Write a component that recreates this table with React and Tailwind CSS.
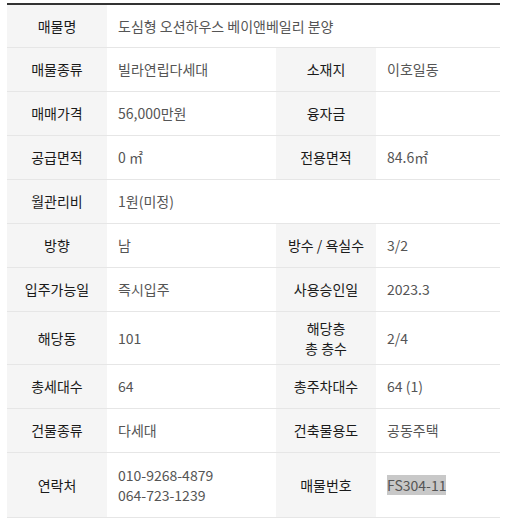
const rows = [
  { cells: [["매물명", "도심형 오션하우스 베이앤베일리 분양"]], full: true },
  { cells: [["매물종류", "빌라연립다세대"], ["소재지", "이호일동"]] },
  { cells: [["매매가격", "56,000만원"], ["융자금", ""]] },
  { cells: [["공급면적", "0 ㎡"], ["전용면적", "84.6㎡"]] },
  { cells: [["월관리비", "1원(미정)"]], full: true },
  { cells: [["방향", "남"], ["방수 / 욕실수", "3/2"]] },
  { cells: [["입주가능일", "즉시입주"], ["사용승인일", "2023.3"]] },
  { cells: [["해당동", "101"], [["해당층", "총 층수"], "2/4"]], h: "h-[53px]" },
  { cells: [["총세대수", "64"], ["총주차대수", "64 (1)"]] },
  { cells: [["건물종류", "다세대"], ["건축물용도", "공동주택"]] },
  { cells: [["연락처", ["010-9268-4879", "064-723-1239"]], ["매물번호", "FS304-11"]], h: "h-[65px]", mark: true },
];

function Lines({ v }) {
  if (Array.isArray(v)) {
    return (
      <div className="flex flex-col leading-[20px]">
        {v.map((l) => (
          <span key={l}>{l}</span>
        ))}
      </div>
    );
  }
  return <span>{v}</span>;
}

export default function App() {
  return (
    <div className="bg-white w-[507px] h-[519px] pt-[3px] px-[7px] font-['Noto_Sans_CJK_KR','Noto_Sans',sans-serif] text-[14px]">
      <div className="border-t-2 border-[#333]">
        {rows.map((r, i) => (
          <div
            key={i}
            className={`grid ${r.full ? "grid-cols-[100px_397px]" : "grid-cols-[100px_169px_100px_128px]"} border-b border-[#e6e6e6] ${r.h || (i === 0 ? "h-[43px]" : "h-[44px]")}`}
          >
            {r.cells.map(([label, value], j) => (
              <div key={j} className="contents">
                <div className="flex items-center justify-center text-center bg-[#f5f5f5] text-[#1a1a1a] leading-[19px]">
                  <Lines v={label} />
                </div>
                <div className="flex items-center pl-[11px] text-[#555]">
                  {r.mark && j === 1 ? (
                    <span className="bg-[#c8c8c8] leading-[20px]">{value}</span>
                  ) : (
                    <Lines v={value} />
                  )}
                </div>
              </div>
            ))}
          </div>
        ))}
      </div>
    </div>
  );
}
